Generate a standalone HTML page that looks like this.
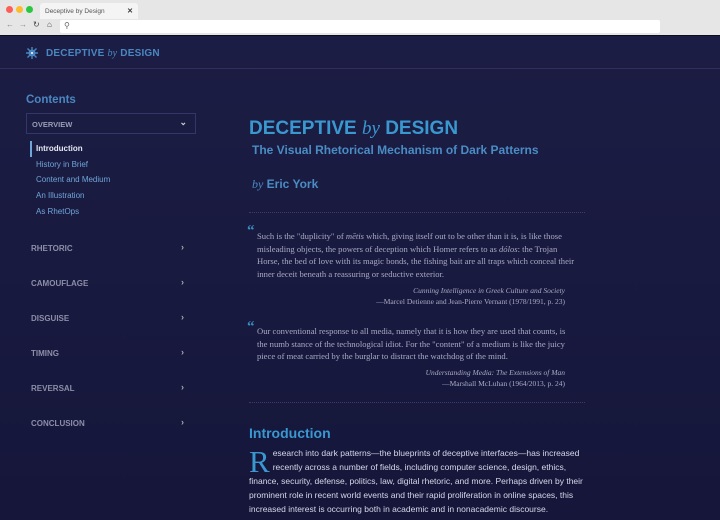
<!DOCTYPE html>
<html><head><meta charset="utf-8"><style>
*{margin:0;padding:0;box-sizing:border-box}
body{width:720px;height:520px;overflow:hidden;font-family:"Liberation Sans",sans-serif;background:#1b1c42;position:relative}
.chrome{position:absolute;left:0;top:0;width:720px;height:36px;background:#e6e6e6;border-bottom:1px solid #0c0c20}
.dot{position:absolute;top:6px;width:7px;height:7px;border-radius:50%}
.tab{position:absolute;left:40px;top:3px;width:98px;height:16px;background:#f4f4f4;border-radius:3px 3px 0 0;font-size:6.5px;color:#555;padding:5px 0 0 5px}
.tab b{position:absolute;right:5px;top:4px;font-size:7px;color:#333}
.url{position:absolute;left:60px;top:20px;width:600px;height:13px;background:#fff;border-radius:2px}
.nav{position:absolute;top:20px;font-size:8px;color:#888}
.main{position:absolute;left:0;top:36px;width:720px;height:484px;background:linear-gradient(#1c1d44,#15163a)}
.hdr{position:absolute;left:0;top:0;width:720px;height:33px;border-bottom:1px solid #2e3060}
.logo{position:absolute;left:46px;top:12px;font-size:10px;font-weight:bold;color:#4a87c0;letter-spacing:.2px}
.logo i,.t i,.by i{font-family:"Liberation Serif",serif;font-weight:normal}
.side{position:absolute;left:26px;top:58px;width:170px}
.side h2{font-size:11.5px;color:#4a87c0;font-weight:bold}
.sel{margin-top:7px;height:21px;border:1px solid #34366a;font-size:7.5px;font-weight:bold;color:#9a9cb8;padding:6px 0 0 5px;position:relative}
.sel span{position:absolute;right:8px;top:3px;font-size:9px;color:#ccc}
.sub{margin-top:7px;padding-left:10px;font-size:8px;color:#6fa5d8;line-height:15.7px}
.sub .a{color:#e6e8f4;border-left:2px solid #6fa5d8;margin-left:-6px;padding-left:4px;font-weight:bold}
.sec{font-size:8px;font-weight:bold;color:#8c8ea8;position:absolute;left:5px}
.sec span{position:absolute;left:150px;top:-2px;font-size:9px;color:#aaa}
.content{position:absolute;left:249px;top:0;width:336px}
.t{position:absolute;top:82px;font-size:19px;font-weight:bold;color:#3a98d0;white-space:nowrap}
.st{position:absolute;left:3px;top:107px;font-size:12px;color:#4a8cc4;white-space:nowrap;font-weight:bold}
.by{position:absolute;left:3px;top:141px;font-size:12px;color:#4a8cc4;font-weight:bold}
.hr{position:absolute;left:0;width:336px;border-top:1px dotted #3a3c68}
.q{position:absolute;left:8px;width:320px;font-family:"Liberation Serif",serif;font-size:8.6px;line-height:12.5px;color:#a9aac4}
.qm{position:absolute;left:-2px;font-family:"Liberation Serif",serif;font-size:15px;color:#3a8cc4;font-weight:bold}
.cite{position:absolute;right:20px;text-align:right;font-family:"Liberation Serif",serif;font-size:7.5px;line-height:11px;color:#a9aac4}
.ih{position:absolute;top:389px;font-size:14px;font-weight:bold;color:#3a98d0}
.body{position:absolute;top:411px;width:338px;font-size:8.5px;line-height:13.9px;color:#d6d8ea}
.cap{float:left;font-family:"Liberation Serif",serif;font-size:31px;line-height:24px;color:#3a98d0;margin:3px 3px 0 0}
</style></head><body>
<div class="chrome">
<div class="dot" style="left:6px;background:#fc5f57"></div>
<div class="dot" style="left:16px;background:#fdbc2e"></div>
<div class="dot" style="left:26px;background:#28c840"></div>
<div class="tab">Deceptive by Design<b>✕</b></div>
<div class="nav" style="left:6px">←</div><div class="nav" style="left:19px">→</div>
<div class="nav" style="left:33px;color:#444">↻</div><div class="nav" style="left:47px;color:#444">⌂</div>
<div class="url"><span style="position:absolute;left:4px;top:1px;font-size:8px;color:#666">⚲</span></div>
</div>
<div class="main">
<div class="hdr">
<svg style="position:absolute;left:25px;top:10px" width="14" height="14" viewBox="0 0 14 14"><g stroke="#4a87c0" stroke-width="1.4" fill="none"><path d="M7 1v12M1 7h12M2.5 2.5l9 9M11.5 2.5l-9 9"/></g><circle cx="7" cy="7" r="3.5" fill="#4a87c0"/><circle cx="7" cy="7" r="1" fill="#fff"/></svg>
<div class="logo">DECEPTIVE <i>by</i> DESIGN</div></div>
<div class="side">
<h2>Contents</h2>
<div class="sel">OVERVIEW<span>⌄</span></div>
<div class="sub"><div class="a">Introduction</div><div>History in Brief</div><div>Content and Medium</div><div>An Illustration</div><div>As RhetOps</div></div>
<div class="sec" style="top:150px">RHETORIC<span>›</span></div>
<div class="sec" style="top:185px">CAMOUFLAGE<span>›</span></div>
<div class="sec" style="top:220px">DISGUISE<span>›</span></div>
<div class="sec" style="top:255px">TIMING<span>›</span></div>
<div class="sec" style="top:290px">REVERSAL<span>›</span></div>
<div class="sec" style="top:325px">CONCLUSION<span>›</span></div>
</div>
<div class="content">
<div class="t">DECEPTIVE <i>by</i> DESIGN</div>
<div class="st">The Visual Rhetorical Mechanism of Dark Patterns</div>
<div class="by"><i>by</i> Eric York</div>
<div class="hr" style="top:176px"></div>
<div class="qm" style="top:187px">“</div>
<div class="q" style="top:194px">Such is the "duplicity" of <i>mētis</i> which, giving itself out to be other than it is, is like those misleading objects, the powers of deception which Homer refers to as <i>dólos</i>: the Trojan Horse, the bed of love with its magic bonds, the fishing bait are all traps which conceal their inner deceit beneath a reassuring or seductive exterior.</div>
<div class="cite" style="top:249px"><i>Cunning Intelligence in Greek Culture and Society</i><br>—Marcel Detienne and Jean-Pierre Vernant (1978/1991, p. 23)</div>
<div class="qm" style="top:283px">“</div>
<div class="q" style="top:289px">Our conventional response to all media, namely that it is how they are used that counts, is the numb stance of the technological idiot. For the "content" of a medium is like the juicy piece of meat carried by the burglar to distract the watchdog of the mind.</div>
<div class="cite" style="top:331px"><i>Understanding Media: The Extensions of Man</i><br>—Marshall McLuhan (1964/2013, p. 24)</div>
<div class="hr" style="top:366px"></div>
<div class="ih">Introduction</div>
<div class="body"><span class="cap">R</span>esearch into dark patterns—the blueprints of deceptive interfaces—has increased recently across a number of fields, including computer science, design, ethics, finance, security, defense, politics, law, digital rhetoric, and more. Perhaps driven by their prominent role in recent world events and their rapid proliferation in online spaces, this increased interest is occurring both in academic and in nonacademic discourse.</div>
</div>
</div>
</body></html>
